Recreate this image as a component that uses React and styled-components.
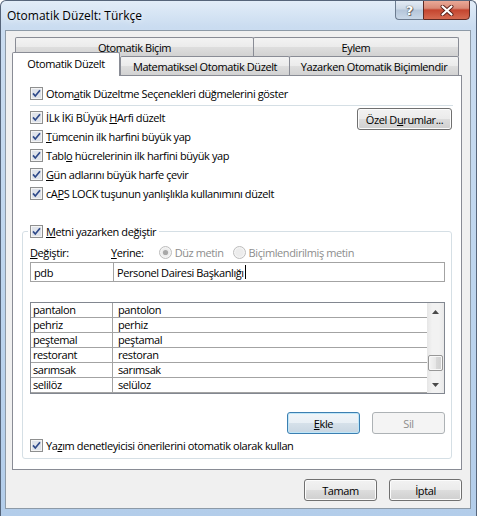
import React from "react";
import styled, { createGlobalStyle } from "styled-components";

const GlobalStyle = createGlobalStyle`
  html, body { margin: 0; padding: 0; background: #fff; }
  body {
    font-family: "Open Sans", "Noto Sans", sans-serif;
    font-size: 11px;
    letter-spacing: -0.4px;
    color: #000;
  }
  * { box-sizing: border-box; }
`;

const Window = styled.div`
  width: 477px;
  height: 516px;
  border: 1px solid #56657a;
  border-bottom: none;
  border-radius: 6px 6px 0 0;
  background: linear-gradient(180deg, #e2edf8 0px, #cadcf0 26px, #bdd5ee 55%, #b3cdea 100%);
  display: flex;
  flex-direction: column;
  overflow: hidden;
`;

const TitleBar = styled.div`
  height: 29px;
  display: flex;
  justify-content: space-between;
  align-items: flex-start;
  padding: 0 6px;
`;

const Title = styled.div`
  align-self: center;
  font-size: 12px;
  letter-spacing: 0;
  color: #000;
  text-shadow: 0 0 6px rgba(255, 255, 255, 0.9);
`;

const CaptionButtons = styled.div`
  display: flex;
  margin-top: -1px;
`;

const HelpButton = styled.div`
  width: 28px;
  height: 20px;
  border: 1px solid #6c7c90;
  border-right: none;
  border-radius: 0 0 0 4px;
  background: linear-gradient(180deg, #e3ebf4 0%, #ccd8e6 45%, #b4c5d9 50%, #c9d8e8 100%);
  display: flex;
  align-items: center;
  justify-content: center;
  font-family: "DejaVu Sans", sans-serif;
  font-weight: bold;
  font-size: 13px;
  letter-spacing: 0;
  color: #fff;
  text-shadow: 0 0 1px #555, 0 0 1px #555, 1px 1px 0 #777;
`;

const CloseButton = styled.div`
  width: 47px;
  height: 20px;
  border: 1px solid #5e2a24;
  border-radius: 0 0 4px 0;
  background: linear-gradient(180deg, #eaa997 0%, #d98a77 40%, #c4452f 50%, #d56a51 100%);
  display: flex;
  align-items: center;
  justify-content: center;
`;

const Client = styled.div`
  width: 466px;
  height: 479px;
  margin-left: 4px;
  border: 1px solid #8d9aa7;
  background: #f0f0f0;
  padding: 6px 8px 0 6px;
  display: flex;
  flex-direction: column;
`;

const TabRow = styled.div`
  display: flex;
  align-items: flex-end;
  height: 19px;
  padding: ${(p) => (p.$back ? "0 3px" : "0 3px 0 0")};
`;

const Tab = styled.div`
  position: relative;
  width: ${(p) => p.$w}px;
  height: ${(p) => (p.$active ? 24 : 19)}px;
  margin-left: ${(p) => (p.$overlap ? -1 : 0)}px;
  margin-bottom: ${(p) => (p.$active ? -1 : 0)}px;
  z-index: ${(p) => (p.$active ? 2 : 1)};
  border: 1px solid #898c95;
  border-bottom: none;
  border-radius: 2px 2px 0 0;
  background: ${(p) =>
    p.$active
      ? "#fff"
      : "linear-gradient(180deg, #f3f3f3 0%, #ebebeb 50%, #dedede 50%, #d2d2d2 100%)"};
  display: flex;
  align-items: center;
  justify-content: center;
  padding-bottom: ${(p) => (p.$active ? 3 : 0)}px;
  white-space: nowrap;
`;

const Panel = styled.div`
  width: 450px;
  height: 395px;
  border: 1px solid #898c95;
  background: #fff;
  padding: 8px 8px 0 17px;
  display: flex;
  flex-direction: column;
`;

const CheckRow = styled.label`
  display: flex;
  align-items: center;
  gap: 3px;
  height: 19px;
  white-space: nowrap;
`;

const Key = styled.span`
  text-decoration: underline;
`;

const Separator = styled.div`
  height: 1px;
  background: #d5dfe5;
  margin: 2px 0;
`;

const Options = styled.div`
  display: flex;
  justify-content: space-between;
  align-items: flex-start;
`;

const Column = styled.div`
  display: flex;
  flex-direction: column;
`;

const Button = styled.div`
  width: ${(p) => p.$w}px;
  height: 22px;
  border: 1px solid ${(p) => (p.$disabled ? "#adb2b5" : p.$default ? "#3c7fb1" : "#707070")};
  border-radius: 3px;
  background: ${(p) =>
    p.$disabled
      ? "#f4f4f4"
      : p.$default
      ? "linear-gradient(180deg, #f0f5f9 0%, #e8eff5 50%, #d6e1ea 50%, #c8d6e2 100%)"
      : "linear-gradient(180deg, #f2f2f2 0%, #ebebeb 50%, #dddddd 50%, #cfcfcf 100%)"};
  box-shadow: inset 0 0 0 1px ${(p) => (p.$disabled ? "#f4f4f4" : p.$default ? "#bfe6f8" : "#fcfcfc")};
  color: ${(p) => (p.$disabled ? "#8d8d8d" : "#000")};
  display: flex;
  align-items: center;
  justify-content: center;
  margin-right: ${(p) => p.$mr || 0}px;
`;

const Group = styled.fieldset`
  margin: 19px 1px 0 -8px;
  border: 1px solid #d5dfe5;
  border-radius: 3px;
  padding: 0 6px 3px 7px;
  min-width: 0;
`;

const Legend = styled.legend`
  padding: 0 3px 0 2px;
  margin-left: -2px;
  height: 19px;
`;

const LabelRow = styled.div`
  display: flex;
  align-items: center;
  height: 18px;
  margin-top: 2px;
  white-space: nowrap;
`;

const FieldLabel = styled.span`
  width: ${(p) => p.$w}px;
  flex: none;
`;

const RadioLabel = styled.span`
  display: flex;
  align-items: center;
  gap: 3px;
  color: #8d8d8d;
  margin: 0 ${(p) => p.$mr}px 0 ${(p) => p.$ml}px;
`;

const InputRow = styled.div`
  display: flex;
  height: 20px;
  margin-top: 1px;
`;

const Field = styled.div`
  width: ${(p) => (p.$w ? `${p.$w}px` : "auto")};
  flex: ${(p) => (p.$w ? "none" : 1)};
  margin-left: ${(p) => (p.$w ? 0 : -1)}px;
  border: 1px solid #a3a3a3;
  display: flex;
  align-items: center;
  padding-left: 3px;
  background: #fff;
`;

const Caret = styled.span`
  display: inline-block;
  width: 1px;
  height: 14px;
  background: #000;
  margin-left: 1px;
`;

const List = styled.div`
  margin-top: 20px;
  height: 92px;
  border: 1px solid #828790;
  display: flex;
`;

const Rows = styled.div`
  flex: 1;
  display: flex;
  flex-direction: column;
`;

const Row = styled.div`
  display: grid;
  grid-template-columns: 82px 1fr;
  height: 15px;
  border-bottom: 1px solid #a3a3a3;
  line-height: 14px;
`;

const Cell = styled.div`
  padding-left: ${(p) => (p.$second ? 5 : 2)}px;
  border-right: ${(p) => (p.$second ? "none" : "1px solid #a3a3a3")};
  white-space: nowrap;
  overflow: hidden;
`;

const ScrollBar = styled.div`
  width: 17px;
  display: flex;
  flex-direction: column;
  background: linear-gradient(90deg, #e6e6e6 0%, #f2f2f2 30%, #f2f2f2 70%, #e9e9e9 100%);
`;

const ScrollArrow = styled.div`
  height: 17px;
  display: flex;
  align-items: center;
  justify-content: center;
`;

const Track = styled.div`
  flex: 1;
  padding-top: 35px;
`;

const Thumb = styled.div`
  height: 16px;
  margin: 0 1px;
  border: 1px solid #979797;
  border-radius: 2px;
  background: linear-gradient(90deg, #f4f4f4 0%, #e7e7e7 50%, #d9d9d9 51%, #d0d0d0 100%);
  box-shadow: inset 0 0 0 1px #f8f8f8;
`;

const ActionRow = styled.div`
  display: flex;
  justify-content: flex-end;
  gap: 12px;
  margin-top: 18px;
`;

const SpellRow = styled(CheckRow)`
  margin-top: 2px;
`;

const Footer = styled.div`
  display: flex;
  justify-content: flex-end;
  gap: 12px;
  margin-top: 9px;
`;

const Checkbox = () => (
  <svg width="13" height="13" viewBox="0 0 13 13">
    <rect x="0.5" y="0.5" width="12" height="12" fill="#f4f4f4" stroke="#8e8f8f" />
    <rect x="2" y="2" width="9" height="9" fill="#dfe3ea" />
    <path d="M3 6.4 L5.3 9 L10 3.2" stroke="#2f4a8a" strokeWidth="1.7" fill="none" />
  </svg>
);

const Radio = ({ checked }) => (
  <svg width="13" height="13" viewBox="0 0 13 13">
    <circle cx="6.5" cy="6.5" r="6" fill="#f4f4f4" stroke="#bcbcbc" />
    <circle cx="6.5" cy="6.5" r="4.3" fill="#ececec" />
    {checked && <circle cx="6.5" cy="6.5" r="2.6" fill="#a8a8a8" />}
  </svg>
);

const Arrow = ({ down }) => (
  <svg width="7" height="4" viewBox="0 0 7 4">
    <path d={down ? "M0 0 L7 0 L3.5 4 Z" : "M0 4 L7 4 L3.5 0 Z"} fill="#4a4a4a" />
  </svg>
);

const CloseGlyph = () => (
  <svg width="14" height="11" viewBox="0 0 14 11">
    <path d="M2.5 1.5 L11.5 9.5 M11.5 1.5 L2.5 9.5" stroke="#5b2019" strokeWidth="4" strokeLinecap="round" />
    <path d="M2.5 1.5 L11.5 9.5 M11.5 1.5 L2.5 9.5" stroke="#fff" strokeWidth="2.2" strokeLinecap="round" />
  </svg>
);

const entries = [
  ["pantalon", "pantolon"],
  ["pehriz", "perhiz"],
  ["peştemal", "peştamal"],
  ["restorant", "restoran"],
  ["sarımsak", "sarımsak"],
  ["selilöz", "selüloz"],
];

const options = [
  <>İLk İKi BÜyük <Key>H</Key>Arfi düzelt</>,
  <><Key>T</Key>ümcenin ilk harfini büyük yap</>,
  <>Tabl<Key>o</Key> hücrelerinin ilk harfini büyük yap</>,
  <><Key>G</Key>ün adlarını büyük harfe çevir</>,
  <>cA<Key>P</Key>S LOCK tuşunun yanlışlıkla kullanımını düzelt</>,
];

export default function App() {
  return (
    <>
      <GlobalStyle />
      <Window>
        <TitleBar>
          <Title>Otomatik Düzelt: Türkçe</Title>
          <CaptionButtons>
            <HelpButton>?</HelpButton>
            <CloseButton>
              <CloseGlyph />
            </CloseButton>
          </CaptionButtons>
        </TitleBar>
        <Client>
          <TabRow $back>
            <Tab $w={239}>Otomatik Biçim</Tab>
            <Tab $w={206} $overlap>Eylem</Tab>
          </TabRow>
          <TabRow>
            <Tab $w={108} $active>Otomatik Düzelt</Tab>
            <Tab $w={170}>Matematiksel Otomatik Düzelt</Tab>
            <Tab $w={170} $overlap>Yazarken Otomatik Biçimlendir</Tab>
          </TabRow>
          <Panel>
            <CheckRow>
              <Checkbox />
              <span>Otom<Key>a</Key>tik Düzeltme Seçenekleri düğmelerini göster</span>
            </CheckRow>
            <Separator />
            <Options>
              <Column>
                {options.map((text, i) => (
                  <CheckRow key={i}>
                    <Checkbox />
                    <span>{text}</span>
                  </CheckRow>
                ))}
              </Column>
              <Button $w={95} $mr={1}>Özel D<Key>u</Key>rumlar...</Button>
            </Options>
            <Group>
              <Legend>
                <CheckRow>
                  <Checkbox />
                  <span><Key>M</Key>etni yazarken değiştir</span>
                </CheckRow>
              </Legend>
              <LabelRow>
                <FieldLabel $w={81}><Key>D</Key>eğiştir:</FieldLabel>
                <span><Key>Y</Key>erine:</span>
                <RadioLabel $ml={15} $mr={9}>
                  <Radio checked />
                  Düz metin
                </RadioLabel>
                <RadioLabel $ml={0} $mr={0}>
                  <Radio />
                  Biçimlendirilmiş metin
                </RadioLabel>
              </LabelRow>
              <InputRow>
                <Field $w={84}>pdb</Field>
                <Field>
                  Personel Dairesi Başkanlığı<Caret />
                </Field>
              </InputRow>
              <List>
                <Rows>
                  {entries.map(([from, to]) => (
                    <Row key={from}>
                      <Cell>{from}</Cell>
                      <Cell $second>{to}</Cell>
                    </Row>
                  ))}
                </Rows>
                <ScrollBar>
                  <ScrollArrow>
                    <Arrow />
                  </ScrollArrow>
                  <Track>
                    <Thumb />
                  </Track>
                  <ScrollArrow>
                    <Arrow down />
                  </ScrollArrow>
                </ScrollBar>
              </List>
              <ActionRow>
                <Button $w={73} $default><Key>E</Key>kle</Button>
                <Button $w={73} $disabled>Sil</Button>
              </ActionRow>
              <SpellRow>
                <Checkbox />
                <span>Ya<Key>z</Key>ım denetleyicisi önerilerini otomatik olarak kullan</span>
              </SpellRow>
            </Group>
          </Panel>
          <Footer>
            <Button $w={73}>Tamam</Button>
            <Button $w={73}>İptal</Button>
          </Footer>
        </Client>
      </Window>
    </>
  );
}
